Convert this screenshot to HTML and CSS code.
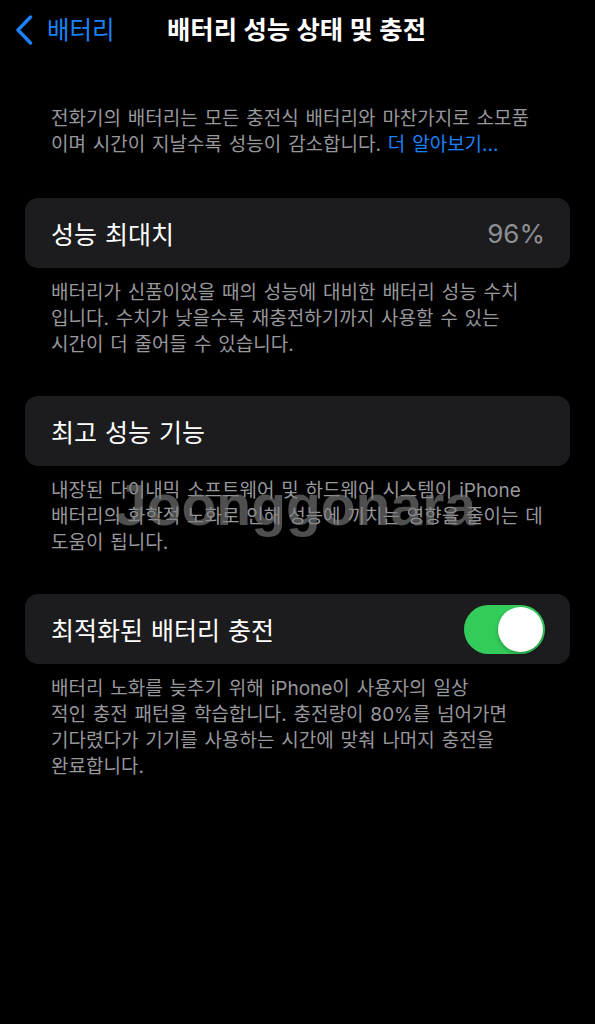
FILE: index.html
```html
<!DOCTYPE html>
<html lang="ko">
<head>
<meta charset="utf-8">
<title>배터리 성능 상태 및 충전</title>
<link rel="stylesheet" href="styles.css">
</head>
<body>
<header class="nav">
  <a class="back" href="#">
    <svg class="chev" viewBox="0 0 18 30" width="18" height="30" aria-hidden="true">
      <path d="M15.5 2 L3 15 L15.5 28" fill="none" stroke="#1a82fb" stroke-width="3.4" stroke-linecap="round" stroke-linejoin="round"/>
    </svg>
    <span class="back-label">배터리</span>
  </a>
  <h1 class="title">배터리 성능 상태 및 충전</h1>
  <span class="spacer"></span>
</header>

<p class="intro">전화기의 배터리는 모든 충전식 배터리와 마찬가지로 소모품<br>이며 시간이 지날수록 성능이 감소합니다. <a class="link" href="#">더 알아보기...</a></p>

<section class="group">
  <div class="card">
    <span class="label">성능 최대치</span>
    <span class="value">96%</span>
  </div>
  <p class="foot">배터리가 신품이었을 때의 성능에 대비한 배터리 성능 수치<br>입니다. 수치가 낮을수록 재충전하기까지 사용할 수 있는<br>시간이 더 줄어들 수 있습니다.</p>
</section>

<section class="group">
  <div class="card">
    <span class="label">최고 성능 기능</span>
  </div>
  <p class="foot">내장된 다이내믹 소프트웨어 및 하드웨어 시스템이 iPhone<br>배터리의 화학적 노화로 인해 성능에 끼치는 영향을 줄이는 데<br>도움이 됩니다.</p>
</section>

<section class="group">
  <div class="card">
    <span class="label">최적화된 배터리 충전</span>
    <span class="toggle"><span class="knob"></span></span>
  </div>
  <p class="foot">배터리 노화를 늦추기 위해 iPhone이 사용자의 일상<br>적인 충전 패턴을 학습합니다. 충전량이 80%를 넘어가면<br>기다렸다가 기기를 사용하는 시간에 맞춰 나머지 충전을<br>완료합니다.</p>
</section>

<div class="watermark">Joonggonara</div>
</body>
</html>
```

FILE: styles.css
```css
* { box-sizing: border-box; }

html, body {
  margin: 0;
  padding: 0;
  background: #000;
}

body {
  position: relative;
  width: 595px;
  min-height: 1024px;
  font-family: Inter, "Noto Sans CJK KR", sans-serif;
  color: #fff;
}

.nav {
  height: 60px;
  display: grid;
  grid-template-columns: 1fr auto 1fr;
  align-items: center;
  padding: 0 15px;
}

.back {
  display: flex;
  align-items: center;
  gap: 14px;
  text-decoration: none;
  color: #1a82fb;
}

.chev { display: block; }

.back-label {
  font-size: 24.5px;
  line-height: 30px;
}

.title {
  margin: 0;
  font-size: 25.4px;
  font-weight: 600;
  line-height: 30px;
  color: #fff;
  white-space: nowrap;
  transform: translateX(-1px);
}

.intro,
.foot {
  margin: 0;
  font-size: 19px;
  word-spacing: 1.5px;
  line-height: 26px;
  color: #97979c;
  white-space: nowrap;
}

.intro {
  margin-top: 46px;
  padding: 0 51px;
}

.link {
  color: #1a82fb;
  text-decoration: none;
}

.group {
  margin: 40px 25px 0 25px;
}

.group + .group {
  margin-top: 38px;
}

.card {
  height: 70px;
  background: #1c1c1e;
  border-radius: 13px;
  display: flex;
  align-items: center;
  justify-content: space-between;
  padding: 0 25px 0 26px;
}

.label {
  font-size: 25px;
  word-spacing: 1px;
  color: #fff;
}

.value {
  font-size: 26px;
  color: #8e8e93;
}

.foot {
  margin-top: 12px;
  padding: 0 26px;
}

.toggle {
  width: 81px;
  height: 49px;
  border-radius: 25px;
  background: #33cc5a;
  display: flex;
  align-items: center;
  justify-content: flex-end;
  padding: 0 2px;
}

.knob {
  width: 45px;
  height: 45px;
  border-radius: 50%;
  background: #fff;
  box-shadow: 0 2px 4px rgba(0, 0, 0, 0.25);
}

.watermark {
  position: absolute;
  left: 115px;
  top: 477px;
  font-family: "Liberation Sans", Arial, sans-serif;
  font-weight: 700;
  font-size: 57px;
  line-height: 57px;
  color: rgba(128, 128, 128, 0.62);
  pointer-events: none;
  white-space: nowrap;
}
```
